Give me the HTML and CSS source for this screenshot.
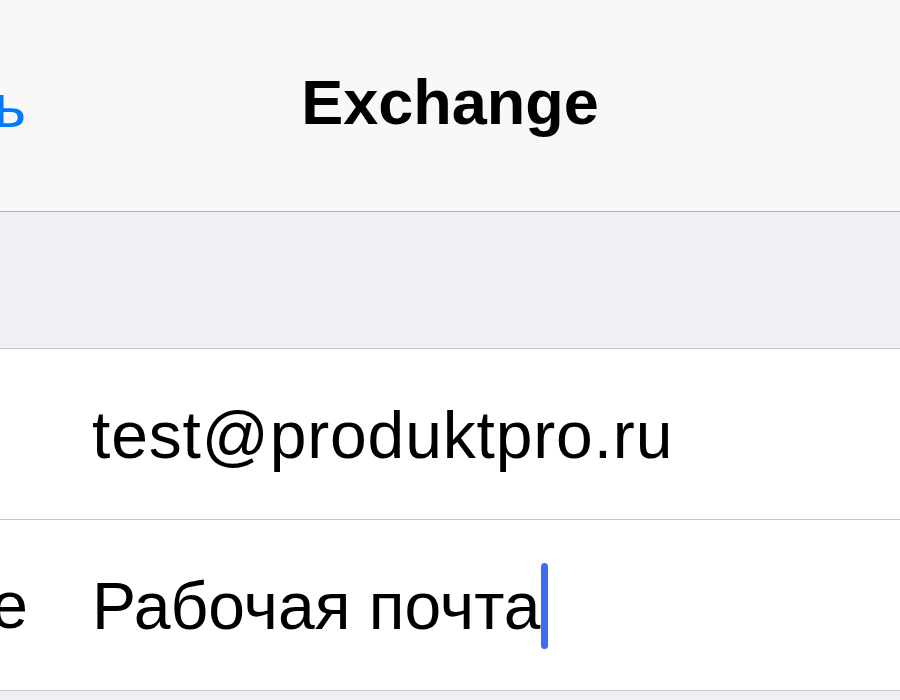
FILE: index.html
```html
<!DOCTYPE html>
<html>
  <head>
    <title>Exchange</title>
    <link rel="stylesheet" href="styles.css">
  </head>
  <body>
    <div class="nav">
      <div class="nav-left">
        <span class="nav-btn">Отменить</span>
      </div>
      <p class="nav-title">Exchange</p>
      <div class="nav-right"></div>
    </div>

    <div class="group-gap"></div>

    <div class="form">
      <div class="row">
        <div class="label"><span>E-mail</span></div>
        <div class="value email">test@produktpro.ru</div>
      </div>
      <div class="row">
        <div class="label"><span>Описание</span></div>
        <div class="value">Рабочая почта<span class="caret"></span></div>
      </div>
    </div>

    <div class="bottom-gap"></div>
  </body>
</html>
```

FILE: styles.css
```css
body {
  margin: 0;
  background-color: #efeff4;
  font-family: "Liberation Sans", Arial, sans-serif;
  color: black;
}

.nav {
  height: 211px;
  background-color: #f8f8f8;
  border-bottom: solid 1px #b3b3b3;
  display: flex;
  align-items: center;
}

.nav-left {
  width: 26px;
  overflow: hidden;
  display: flex;
  justify-content: flex-end;
}

.nav-btn {
  color: #007aff;
  font-size: 62px;
  white-space: nowrap;
}

.nav-title {
  flex: 1;
  margin: 0;
  text-align: center;
  font-size: 63px;
  font-weight: bold;
  margin-right: 26px;
  margin-bottom: 8px;
}

.group-gap {
  height: 136px;
}

.bottom-gap {
  height: 8px;
}

.form {
  background-color: white;
  border-top: solid 1px #c8c7cc;
  border-bottom: solid 1px #c8c7cc;
}

.row {
  height: 170px;
  display: flex;
  align-items: center;
  border-bottom: solid 1px #c8c7cc;
}

.row:last-child {
  border-bottom: none;
}

.label {
  width: 28px;
  overflow: hidden;
  display: flex;
  justify-content: flex-end;
  margin-right: 64px;
  font-size: 66px;
  white-space: nowrap;
}

.row:first-child .label {
  width: 0;
  margin-right: 92px;
}

.value {
  font-size: 66px;
  white-space: nowrap;
  display: flex;
  align-items: center;
  margin-top: 2px;
}

.email {
  letter-spacing: 0.85px;
}

.caret {
  display: inline-block;
  width: 7px;
  height: 86px;
  border-radius: 4px;
  background-color: #3d6cf0;
  margin-left: 1px;
}
```
